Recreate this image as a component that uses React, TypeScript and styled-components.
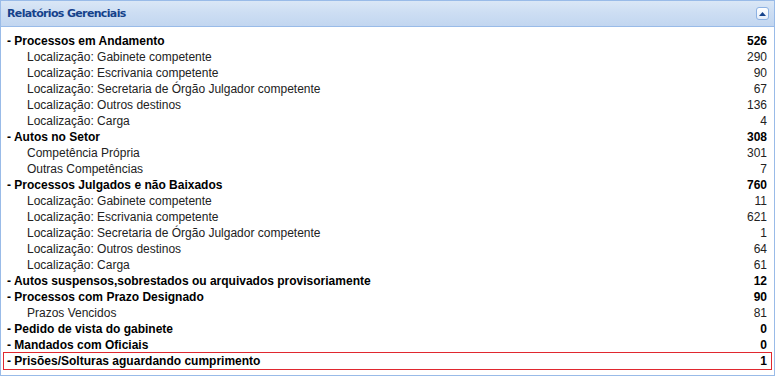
import React from 'react';
import styled, { createGlobalStyle } from 'styled-components';

const GlobalStyle = createGlobalStyle`
  body {
    margin: 0;
    background: #ffffff;
    font-family: 'Liberation Sans', Arial, sans-serif;
  }
`;

const Panel = styled.div`
  width: 775px;
  height: 376px;
  box-sizing: border-box;
  border: 1px solid #99bbe8;
  background: #ffffff;
  display: flex;
  flex-direction: column;
`;

const PanelHeader = styled.div`
  height: 25px;
  flex-shrink: 0;
  display: flex;
  align-items: center;
  justify-content: space-between;
  padding: 0 5px 0 6px;
  background: linear-gradient(to bottom, #dae7f6 0%, #cddef3 45%, #c2d6f0 100%);
  border-bottom: 1px solid #99bbe8;
`;

const PanelTitle = styled.span`
  font-family: 'DejaVu Sans', Tahoma, sans-serif;
  font-size: 11px;
  font-weight: bold;
  color: #15428b;
  letter-spacing: -0.65px;
`;

const CollapseButton = styled.div`
  width: 13px;
  height: 13px;
  box-sizing: border-box;
  border: 1px solid #8db2e3;
  border-radius: 3px;
  background: linear-gradient(to bottom, #ffffff, #e4edf9);
  display: flex;
  align-items: center;
  justify-content: center;
`;

const Body = styled.div`
  padding: 6px 2px 0 2px;
`;

const Table = styled.div`
  display: flex;
  flex-direction: column;
`;

const Row = styled.div<{ $level: number; $highlight?: boolean }>`
  height: 16px;
  box-sizing: border-box;
  display: flex;
  align-items: center;
  justify-content: space-between;
  padding: 0 4px 0 ${(p) => (p.$level === 0 ? 3 : 23)}px;
  border: 1px solid ${(p) => (p.$highlight ? '#e0282f' : 'transparent')};
  font-size: 12px;
  font-weight: ${(p) => (p.$level === 0 ? 'bold' : 'normal')};
  color: ${(p) => (p.$level === 0 ? '#000000' : '#222222')};
  ${(p) => p.$highlight && 'height: 18px; margin-top: -1px;'}
`;

const Label = styled.span`
  white-space: nowrap;
`;

const Count = styled.span`
  text-align: right;
`;

type Item = { label: string; value: number; level: number; highlight?: boolean };

const items: Item[] = [
  { label: '- Processos em Andamento', value: 526, level: 0 },
  { label: 'Localização: Gabinete competente', value: 290, level: 1 },
  { label: 'Localização: Escrivania competente', value: 90, level: 1 },
  { label: 'Localização: Secretaria de Órgão Julgador competente', value: 67, level: 1 },
  { label: 'Localização: Outros destinos', value: 136, level: 1 },
  { label: 'Localização: Carga', value: 4, level: 1 },
  { label: '- Autos no Setor', value: 308, level: 0 },
  { label: 'Competência Própria', value: 301, level: 1 },
  { label: 'Outras Competências', value: 7, level: 1 },
  { label: '- Processos Julgados e não Baixados', value: 760, level: 0 },
  { label: 'Localização: Gabinete competente', value: 11, level: 1 },
  { label: 'Localização: Escrivania competente', value: 621, level: 1 },
  { label: 'Localização: Secretaria de Órgão Julgador competente', value: 1, level: 1 },
  { label: 'Localização: Outros destinos', value: 64, level: 1 },
  { label: 'Localização: Carga', value: 61, level: 1 },
  { label: '- Autos suspensos,sobrestados ou arquivados provisoriamente', value: 12, level: 0 },
  { label: '- Processos com Prazo Designado', value: 90, level: 0 },
  { label: 'Prazos Vencidos', value: 81, level: 1 },
  { label: '- Pedido de vista do gabinete', value: 0, level: 0 },
  { label: '- Mandados com Oficiais', value: 0, level: 0 },
  { label: '- Prisões/Solturas aguardando cumprimento', value: 1, level: 0, highlight: true },
];

const App: React.FC = () => {
  return (
    <>
      <GlobalStyle />
      <Panel>
        <PanelHeader>
          <PanelTitle>Relatórios Gerenciais</PanelTitle>
          <CollapseButton>
            <svg width="7" height="4" viewBox="0 0 7 4">
              <path d="M0 4 L3.5 0 L7 4 Z" fill="#15428b" />
            </svg>
          </CollapseButton>
        </PanelHeader>
        <Body>
          <Table>
            {items.map((item, i) => (
              <Row key={i} $level={item.level} $highlight={item.highlight}>
                <Label>{item.label}</Label>
                <Count>{item.value}</Count>
              </Row>
            ))}
          </Table>
        </Body>
      </Panel>
    </>
  );
};

export default App;
